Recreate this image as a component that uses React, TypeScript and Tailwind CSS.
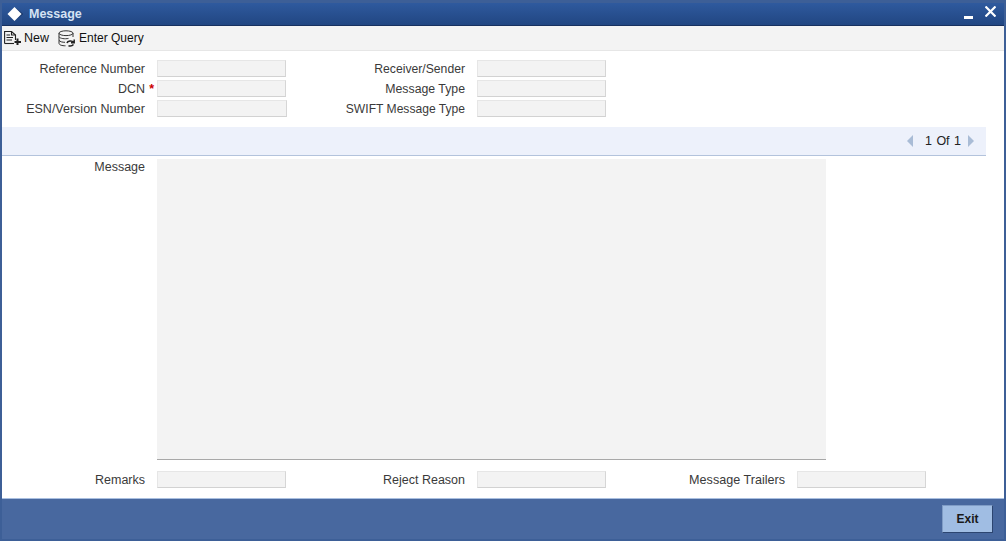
import React from 'react';

const Field = ({ w = 'w-[129px]' }: { w?: string }) => (
  <div className={`${w} h-[17px] shrink-0 bg-[#f3f3f3] border border-[#e6e6e6] border-b-[#d2d2d2] border-r-[#d6d6d6]`} />
);

const Label = ({ text, w, size = 'text-[12.5px]', required }: { text: string; w: string; size?: string; required?: boolean }) => (
  <div className={`${w} ${size} shrink-0 relative text-right leading-[18px] text-[#3a3a3a]`}>
    {text}
    {required && <span className="absolute right-[-9px] top-0 text-[#c00] font-bold">*</span>}
  </div>
);

const NewIcon = () => (
  <svg width="18" height="16" viewBox="0 0 18 16" fill="none" stroke="#222" strokeWidth="1.1">
    <path d="M0.6 13.5V1.5H7.5L11.5 5V10" />
    <path d="M7.5 1.5V5H11.5" />
    <path d="M2.5 5H6M2.5 7.5H9M2.5 10H8" />
    <path d="M0.6 13.5H10" />
    <path d="M13.5 8.5V15M10.5 12H17" strokeWidth="2" />
  </svg>
);

const QueryIcon = () => (
  <svg width="18" height="17" viewBox="0 0 18 17" fill="none" stroke="#333" strokeWidth="1">
    <ellipse cx="8" cy="3.2" rx="7" ry="2.4" />
    <path d="M1 3.2V13.2C1 15 4 15.8 7.5 15.8M15 3.2V7" />
    <path d="M1 6.8C2 8.6 7 9.2 10.5 8.4M1 10.3C2 11.8 4.5 12.3 7 12.3" />
    <path d="M9 13C9.6 10.8 13.8 10 15.8 12.5M16.2 9.6V12.8H13" strokeWidth="1.5" stroke="#222" />
    <path d="M10.5 15.7C12.5 16.3 14.5 15.6 15.5 14.5" strokeWidth="1.5" stroke="#222" />
  </svg>
);

export default function App() {
  return (
    <div className="w-[1006px] h-[541px] flex flex-col bg-white border-x-2 border-b-2 border-[#3d5f97] overflow-hidden font-['Liberation_Sans',Arial,sans-serif]">
      <div className="h-[26px] shrink-0 flex items-center justify-between bg-gradient-to-b from-[#2f5a9e] to-[#214682] border-t-[3px] border-t-[#3d5f97] border-b border-b-[#17305f]">
        <div className="flex items-center">
          <svg width="18" height="16" viewBox="0 0 18 16" className="ml-[4px]">
            <path d="M9.5 1.5L17 8L9.5 14.5L16 8Z" fill="#10264f" />
            <path d="M8.5 1L15.5 8L8.5 15L1.5 8Z" fill="#fff" />
          </svg>
          <span className="ml-[5px] text-[12.5px] font-bold text-[#d5e2f3]">Message</span>
        </div>
        <div className="flex items-center mr-[8px] text-white">
          <div className="w-[9px] h-[3px] bg-white mt-[6px]" />
          <svg width="11" height="11" viewBox="0 0 11 11" className="ml-[12px] mb-[6px]" stroke="#fff" strokeWidth="2.2">
            <path d="M0.5 0.5L10.5 10.5M10.5 0.5L0.5 10.5" />
          </svg>
        </div>
      </div>

      <div className="h-[25px] shrink-0 flex items-center bg-[#f3f3f3] border-b border-[#e6e6e6] text-[12.5px] text-[#111]">
        <div className="ml-[2px] flex items-center gap-[2px]">
          <NewIcon />
          <span>New</span>
        </div>
        <div className="ml-[9px] flex items-center gap-[3px]">
          <QueryIcon />
          <span className="text-[12px]">Enter Query</span>
        </div>
      </div>

      <div className="h-[76px] shrink-0 pt-[9px] flex flex-col gap-[2px]">
        <div className="flex">
          <Label text="Reference Number" w="w-[143px]" />
          <div className="w-[12px]" />
          <Field />
          <Label text="Receiver/Sender" w="w-[179px]" size="text-[12.2px]" />
          <div className="w-[12px]" />
          <Field />
        </div>
        <div className="flex">
          <Label text="DCN" w="w-[143px]" required />
          <div className="w-[12px]" />
          <Field />
          <Label text="Message Type" w="w-[179px]" size="text-[12.3px]" />
          <div className="w-[12px]" />
          <Field />
        </div>
        <div className="flex">
          <Label text="ESN/Version Number" w="w-[143px]" />
          <div className="w-[12px]" />
          <Field w="w-[130px]" />
          <Label text="SWIFT Message Type" w="w-[178px]" size="text-[12.1px]" />
          <div className="w-[12px]" />
          <Field />
        </div>
      </div>

      <div className="h-[29px] shrink-0 w-[984px] flex items-center justify-end bg-[#edf1fb] border-b border-[#b3c3dc] text-[12.5px] text-[#222]">
        <span className="w-0 h-0 border-y-[6px] border-y-transparent border-r-[6px] border-r-[#a9bcd6]" />
        <span className="ml-[12px] mr-[7px] [word-spacing:1px]">1 Of 1</span>
        <span className="w-0 h-0 border-y-[6px] border-y-transparent border-l-[6px] border-l-[#a9bcd6] mr-[12px]" />
      </div>

      <div className="flex pt-[3px] shrink-0">
        <div className="w-[143px] shrink-0 text-right text-[12.5px] leading-[16px] text-[#3a3a3a]">Message</div>
        <div className="w-[12px]" />
        <div className="w-[669px] h-[301px] bg-[#f3f3f3] border-b border-[#a8a8a8]" />
      </div>

      <div className="flex mt-[11px] shrink-0">
        <Label text="Remarks" w="w-[143px]" />
        <div className="w-[12px]" />
        <Field />
        <Label text="Reject Reason" w="w-[179px]" />
        <div className="w-[12px]" />
        <Field />
        <Label text="Message Trailers" w="w-[179px]" size="text-[12.6px]" />
        <div className="w-[12px]" />
        <Field />
      </div>

      <div className="mt-[9px] flex-1 flex items-start justify-end bg-[#48689f] border-t border-[#a9bfe0] pt-[6px] pr-[11px]">
        <button className="w-[51px] h-[28px] bg-[#a0bde3] border border-[#7f9cc6] border-r-[#2c4570] border-b-[#2c4570] text-[12px] font-bold text-[#1a1a1a]">
          Exit
        </button>
      </div>
    </div>
  );
}
